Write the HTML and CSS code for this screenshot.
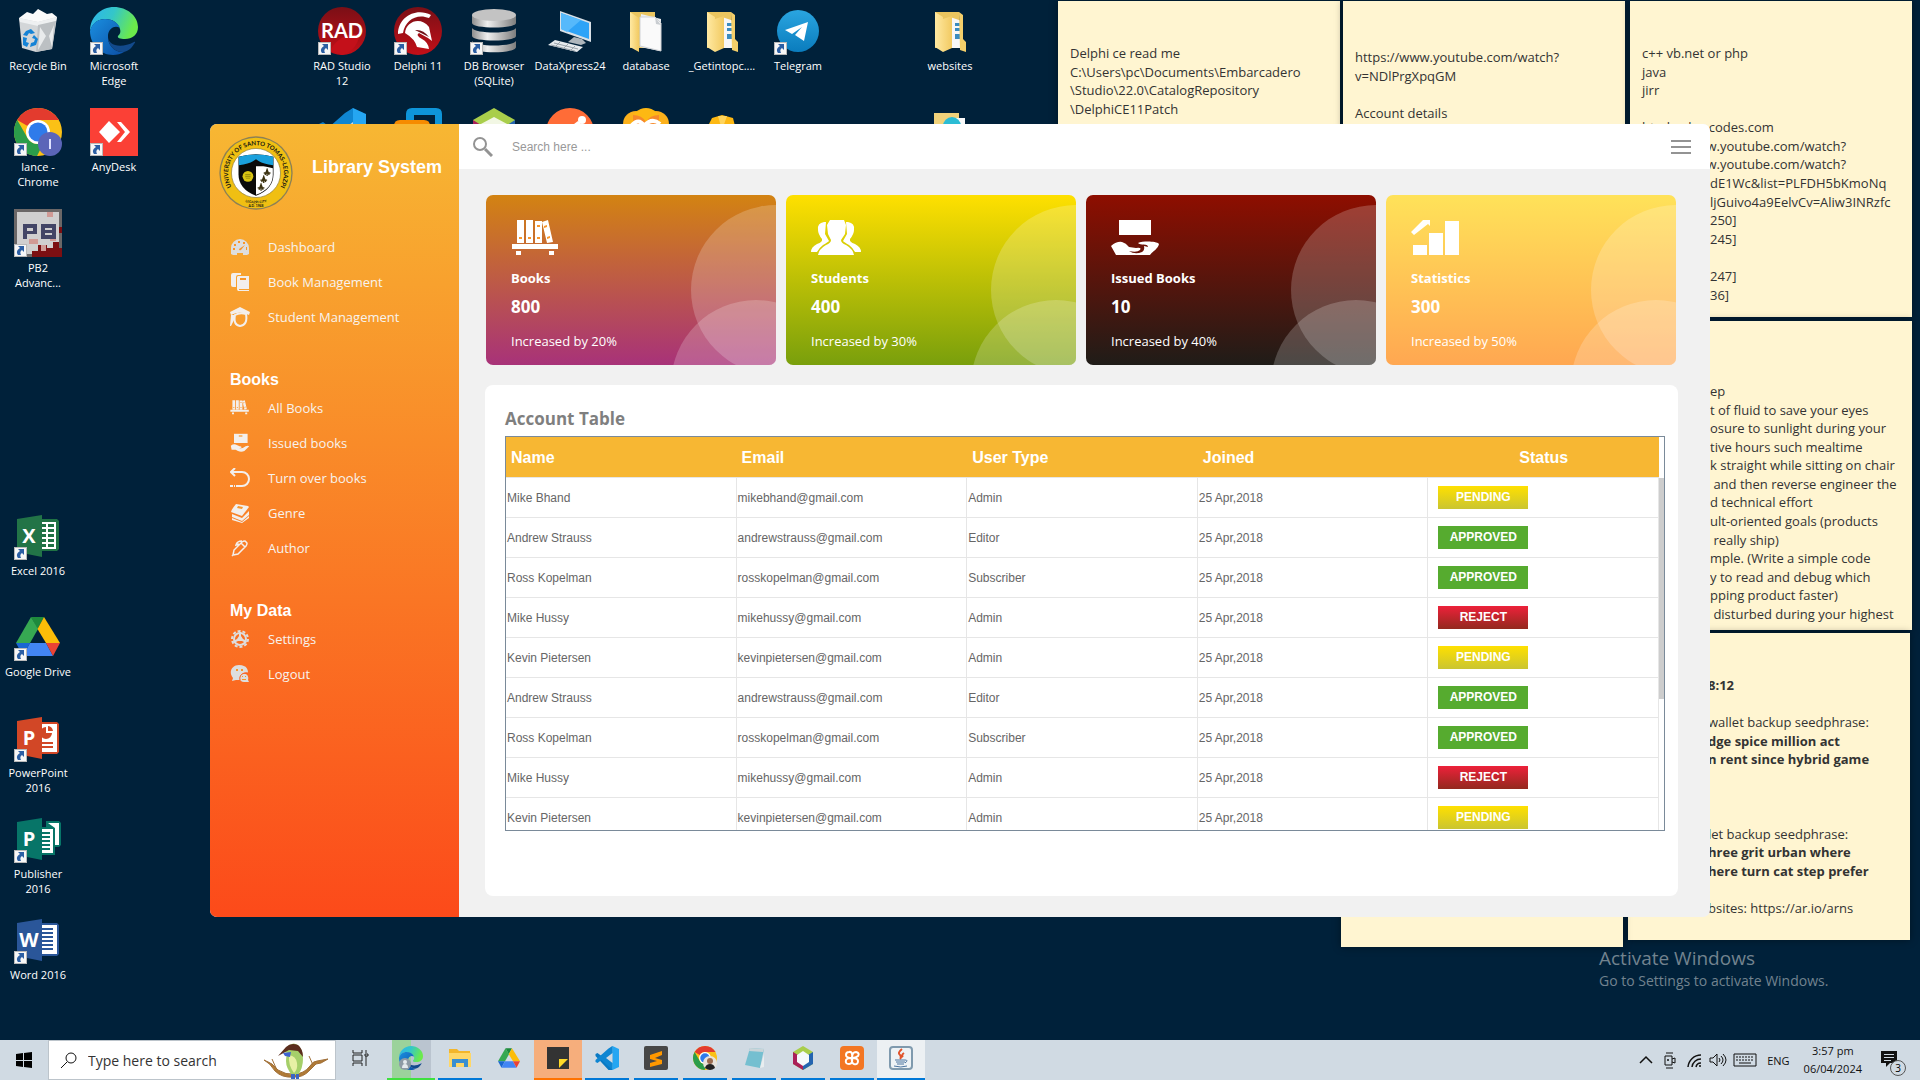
FILE: index.html
```html
<!DOCTYPE html>
<html lang="en">
  <head>
    <meta charset="UTF-8" />
    <meta name="viewport" content="width=device-width, initial-scale=1.0" />
    <title>Library System</title>
    <link rel="stylesheet" href="styles.css">
  </head>
  <body>
    <!-- shared icon shapes -->
    <svg class="defs" aria-hidden="true">
      <defs>
        <linearGradient id="gEdgeTop" x1="0" y1="0" x2="1" y2="0.3">
          <stop offset="0" stop-color="#2cb4ee" />
          <stop offset="0.5" stop-color="#34c6c9" />
          <stop offset="1" stop-color="#6bea4b" />
        </linearGradient>
        <linearGradient id="gEdgeLow" x1="0" y1="0" x2="1" y2="1">
          <stop offset="0" stop-color="#1a8fe0" />
          <stop offset="1" stop-color="#0c4fa5" />
        </linearGradient>
        <linearGradient id="gRad" x1="0" y1="0" x2="0" y2="1">
          <stop offset="0" stop-color="#7a0f16" />
          <stop offset="1" stop-color="#c30f18" />
        </linearGradient>
        <linearGradient id="gSilver" x1="0" y1="0" x2="1" y2="0">
          <stop offset="0" stop-color="#8e8e8e" />
          <stop offset="0.35" stop-color="#efefef" />
          <stop offset="1" stop-color="#7d7d7d" />
        </linearGradient>
        <linearGradient id="gTelegram" x1="0" y1="0" x2="0" y2="1">
          <stop offset="0" stop-color="#2aa5e0" />
          <stop offset="1" stop-color="#0a7cbd" />
        </linearGradient>
        <linearGradient id="gFolder" x1="0" y1="0" x2="1" y2="0">
          <stop offset="0" stop-color="#ffe9a2" />
          <stop offset="1" stop-color="#f2ca62" />
        </linearGradient>
      </defs>
      <symbol id="shortcut" viewBox="0 0 13 13">
        <path d="M0 0h13v13H0z" fill="#b9b9b9" />
        <path d="M1 1h11v11H1z" fill="#f7f7f7" />
        <path d="M4 2h6v6L8 6C6 7 6 9 7 11H4C2 8 3 6 6 4z" fill="#2c5fa4" />
      </symbol>
      <symbol id="edge" viewBox="0 0 48 48">
        <path d="M0 24C0 10 11 0 24 0s24 9 24 20c0 8-6 12-13 12-5 0-8-1-7-3 2-2 3-4 2-7C28 16 23 12 15 12 7 12 2 17 0 24z" fill="url(#gEdgeTop)" />
        <path d="M0 24c2-8 8-12 15-12 8 0 13 4 15 9-5-3-11 0-12 7-1 10 7 18 16 17-3 2-7 3-11 3C10 48 0 37 0 24z" fill="url(#gEdgeLow)" />
        <path d="M18 28c-1 11 13 14 26 7 2-1 1 1 0 2-3 5-6 7-10 8-9 1-17-7-16-17z" fill="#124a8c" />
      </symbol>
      <symbol id="chrome" viewBox="0 0 48 48">
        <circle cx="24" cy="24" r="24" fill="#fbc116" />
        <path d="M24 0a24 24 0 0 1 21 12H24a12 12 0 0 0-10.400 6L3.200 12A24 24 0 0 1 24 0z" fill="#e33b2e" />
        <path d="M3.200 12l10.400 18A12 12 0 0 0 24 36h5l-6 12A24 24 0 0 1 3.200 12z" fill="#2b9d4a" />
        <circle cx="24" cy="24" r="12" fill="#fff" />
        <circle cx="24" cy="24" r="9.500" fill="#2f7bea" />
      </symbol>
      <symbol id="drive" viewBox="0 0 44 39">
        <path d="M15 0h13l-6.500 12z" fill="#1e8a3c" />
        <path d="M15 0L0 26h14L22 12z" fill="#36a852" />
        <path d="M28 0l16 26H30L21.500 12z" fill="#fcbd08" />
        <path d="M0 26h14l-7 13z" fill="#1967d2" />
        <path d="M14 26h16l7 13H7z" fill="#4285f4" />
        <path d="M30 26h14l-7 13z" fill="#ea4335" />
      </symbol>
      <symbol id="vscode" viewBox="0 0 48 48">
        <path d="M35 0L13 20 5 14l-4 2v4l26 28h8z" fill="#0a7ac4" />
        <path d="M35 48L13 28l-8 6-4-2v-4L27 5l8-5z" fill="#0f86d2" />
        <path d="M35 0l13 6v36l-13 6z" fill="#25a6f2" />
        <path d="M35 14v20L22 24z" fill="#cfd9e2" />
      </symbol>
      <symbol id="folder" viewBox="0 0 48 48">
        <path d="M9 5h24v36H9z" fill="#eac55f" />
        <path d="M24 10l12 4v27H24z" fill="#f7f7f7" />
        <path d="M29 16h6v3h-6zm0 5h6v3h-6zm0 6h6v5h-6z" fill="#3a8cc0" />
        <path d="M9 5l8 5v35l-8-5zM17 12l9-3v32l-9 4z" fill="url(#gFolder)" />
        <path d="M33 5l4 3v24l3 3v10l-6-2z" fill="#f4cf6a" />
      </symbol>
      <symbol id="shelf" viewBox="0 0 50 35">
        <path d="M6 0h7v23H6zm9 0h7v23h-7zm9 1h7v22h-7zm7 1l6-2 5 22-6 1zM1 24h46v5H1zm4 7h5v4H5zm33 0h5v4h-5z" fill="currentColor" />
        <path d="M8 17h3v2H8zm9 0h3v2h-3zm9 0h3v2h-3zm0-12h3v2h-3zm7 1l3-1v2l-3 1zm3 11l3-1v2l-3 1z" class="cut" />
      </symbol>
      <symbol id="giving" viewBox="0 0 50 35">
        <path d="M8 0h32v15H8z" fill="currentColor" />
        <path d="M0 26q6-5 11-4 4 1 7 5l7 1q6-1 4 2-3 3-11 1 6 4 13 1 3-2 2-6l4 1c0-4-8-1-10-4 5-2 18-2 21 1-1 5-6 7-9 11H19L5 35z" fill="currentColor" />
      </symbol>
    </svg>

    <main class="desktop">
      <div class="icons">
        <a class="shortcut c1 r1" href="#">
          <svg viewBox="0 0 48 48"><path d="M5 11l38-1-5 32-16 3-14-4z" fill="#d3d6d8" /><path d="M5 11l8-6 6 2 5-5 9 5 5-1 5 4-19 5z" fill="#fafafa" /><path d="M5 11l19 4 19-5-1 4-18 5L6 15z" fill="#eef0f1" /><path d="M24 18l18-4-4 28-16 3z" fill="#bcc0c3" /><path d="M26 20l6 9-8 14zM40 18l-5 11 3 11z" fill="#e9ebec" /><path d="M12 24l5-2 4 4-4 1-2-1-2 3-4-1zM9 30l4 1-1 4 3 1-2 4-4-2zM20 28l4 4-2 6-6 2 1-4 3-1 1-3-3-1z" fill="#1583d6" /></svg>
          Recycle Bin
        </a>
        <a class="shortcut c1 r2" href="#">
          <svg viewBox="0 0 48 48"><use href="#chrome" width="48" height="48" /><circle cx="36" cy="36" r="12" fill="#5b65b8" /><path d="M35 31h2v10h-2z" fill="#dfe2ff" /><use href="#shortcut" y="35" width="13" height="13" /></svg>
          lance - Chrome
        </a>
        <a class="shortcut c1 r3" href="#">
          <svg viewBox="0 0 48 48"><path d="M0 0h48v48H0z" fill="#6b6767" /><path d="M3 3h42v42H3z" fill="#d0cfcf" /><path d="M45 18h3v6h-3zM39 33h6v6h3v9H18v-6h6v-6h9v3h6z" fill="#7c0f12" /><path d="M15 30h9v5h-9zm18-27h6v5h-6zm3 24h6v5h-6zM27 36h5v6h-5z" fill="#d09a95" /><path d="M9 15h14v10H13v5H9zm4 4v3h6v-3zM27 15h15v15H27zm4 4v2h7v-2zm0 5v2h7v-2z" fill="#434566" fill-rule="evenodd" /><use href="#shortcut" y="35" width="13" height="13" /></svg>
          PB2 Advanc...
        </a>
        <a class="shortcut c1 r6" href="#">
          <svg viewBox="0 0 48 48"><path d="M27 7h16l2 2v28l-2 2H27z" fill="#1f7244" /><path d="M28 10h14v27H28z" fill="#fff" /><path d="M28 12h4v3h-4zm6 0h6v3h-6zm-6 5h4v3h-4zm6 0h6v3h-6zm-6 5h4v3h-4zm6 0h6v3h-6zm-6 5h4v3h-4zm6 0h6v3h-6zm-6 5h4v3h-4zm6 0h6v3h-6z" fill="#1f7244" /><path d="M3 7l25-4v42L3 40z" fill="#227447" /><text x="15" y="31" class="letter">X</text><use href="#shortcut" y="35" width="13" height="13" /></svg>
          Excel 2016
        </a>
        <a class="shortcut c1 r7" href="#">
          <svg viewBox="0 0 48 48"><use href="#drive" x="2" y="4" width="44" height="39" /><use href="#shortcut" y="35" width="13" height="13" /></svg>
          Google Drive
        </a>
        <a class="shortcut c1 r8" href="#">
          <svg viewBox="0 0 48 48"><path d="M27 8h16l2 2v28l-2 2H27z" fill="#d24726" /><path d="M28 10h15v28H28z" fill="#fff" /><path d="M32 13v6h6a6 6 0 1 1-6-6zm2-1a6 6 0 0 1 5 5h-5zM28 28h11v2H28zm0 4h11v2H28z" fill="#d24726" /><path d="M3 7l25-4v42L3 40z" fill="#d24726" /><text x="15" y="31" class="letter">P</text><use href="#shortcut" y="35" width="13" height="13" /></svg>
          PowerPoint 2016
        </a>
        <a class="shortcut c1 r9" href="#">
          <svg viewBox="0 0 48 48"><path d="M32 6h13l2 2v22l-2 2h-4v8H27V12h5z" fill="#077568" /><path d="M34 8h11v22h-4V13z" fill="#fff" /><path d="M28 14h11v24H28z" fill="#fff" /><path d="M28 17h8v2h-8zm0 4h8v2h-8zm0 4h8v2h-8zm0 4h8v2h-8zm0 4h8v2h-8z" fill="#077568" /><path d="M3 7l25-4v42L3 40z" fill="#077568" /><text x="15" y="31" class="letter">P</text><use href="#shortcut" y="35" width="13" height="13" /></svg>
          Publisher 2016
        </a>
        <a class="shortcut c1 r10" href="#">
          <svg viewBox="0 0 48 48"><path d="M27 7h16l2 2v29l-2 2H27z" fill="#2a5699" /><path d="M28 9h15v29H28z" fill="#fff" /><path d="M28 12h11v2H28zm0 4h11v2H28zm0 4h11v2H28zm0 4h11v2H28zm0 4h11v2H28zm0 4h11v2H28z" fill="#2a5699" /><path d="M3 7l25-4v42L3 40z" fill="#2a5699" /><text x="15" y="31" class="letter">W</text><use href="#shortcut" y="35" width="13" height="13" /></svg>
          Word 2016
        </a>
        <a class="shortcut c2 r1" href="#">
          <svg viewBox="0 0 48 48"><use href="#edge" width="48" height="48" /><use href="#shortcut" y="35" width="13" height="13" /></svg>
          Microsoft Edge
        </a>
        <a class="shortcut c2 r2" href="#">
          <svg viewBox="0 0 48 48"><path d="M0 0h48v48H0z" fill="#fb4036" /><path d="M19 13l11 11-11 11L9 24z" fill="#fff" /><path d="M27 14h4l9 10-9 10h-4l8-10z" fill="#fff" /><use href="#shortcut" y="35" width="13" height="13" /></svg>
          AnyDesk
        </a>
        <a class="shortcut c5 r1" href="#">
          <svg viewBox="0 0 48 48"><circle cx="24" cy="24" r="24" fill="url(#gRad)" /><path d="M12 44q9-18 30-17-4 18-18 21z" fill="#c4101a" /><text x="24" y="31" class="rad">RAD</text><use href="#shortcut" y="35" width="13" height="13" /></svg>
          RAD Studio 12
        </a>
        <a class="shortcut c6 r1" href="#">
          <svg viewBox="0 0 48 48"><circle cx="24" cy="24" r="24" fill="url(#gRad)" /><path d="M4 27C4 10 22 0 37 8l-2 3C23 6 11 13 9 26z" fill="#fff" /><path d="M11 26c1-12 16-17 24-6l3 14-4-3-9-5q-4 2 3 6 6 3 7 10l-12-2q-2-8-12-14z" fill="#fff" /><path d="M21 23q8-1 14 7l-8-4z" fill="#6f1218" /><use href="#shortcut" y="35" width="13" height="13" /></svg>
          Delphi 11
        </a>
        <a class="shortcut c7 r1" href="#">
          <svg viewBox="0 0 48 48"><path d="M2 8v8c0 6 44 6 44 0V8zM2 21v8c0 6 44 6 44 0v-8c-3 6-41 6-44 0zM2 34v6c0 7 44 7 44 0v-6c-3 6-41 6-44 0z" fill="url(#gSilver)" /><ellipse cx="24" cy="8" rx="22" ry="6" fill="#c3c3c3" /><use href="#shortcut" y="35" width="13" height="13" /></svg>
          DB Browser (SQLite)
        </a>
        <a class="shortcut c8 r1" href="#">
          <svg viewBox="0 0 48 48"><path d="M14 4l31 11v20L14 24z" fill="#d9e0e6" /><path d="M15 6l28 10v16L15 22z" fill="#2ea3f7" /><path d="M15 6l20 7-14 12-6-3z" fill="#56b9fb" /><path d="M28 30l8 2 4 4-5 2-13-3z" fill="#aeb6bc" /><path d="M9 33l28 7-6 5L2 38z" fill="#e6eaed" /><path d="M8 36l24 6M5 38l24 6M14 35l-5 5M22 37l-5 5M29 39l-5 5" stroke="#9aa3aa" /></svg>
          DataXpress24
        </a>
        <a class="shortcut c9 r1" href="#">
          <svg viewBox="0 0 48 48"><path d="M8 5h25v36H8z" fill="#eac55f" /><path d="M19 7l20 5-1 32-20-4z" fill="#eef0f2" /><path d="M18 10h15l6 6v28l-21-5z" fill="#fafafa" stroke="#cfd2d5" /><path d="M33 10l1 7 5 1z" fill="#c9cdd1" /><path d="M8 5l9 6v34l-9-5z" fill="url(#gFolder)" /></svg>
          database
        </a>
        <a class="shortcut c10 r1" href="#">
          <svg viewBox="0 0 48 48"><use href="#folder" width="48" height="48" /></svg>
          _Getintopc....
        </a>
        <a class="shortcut c11 r1" href="#">
          <svg viewBox="0 0 48 48"><circle cx="24" cy="24" r="21" fill="url(#gTelegram)" /><path d="M11 23l23-8-4 19-9-6 7-8-10 7z" fill="#fff" /><use href="#shortcut" y="35" width="13" height="13" /></svg>
          Telegram
        </a>
        <a class="shortcut c13 r1" href="#">
          <svg viewBox="0 0 48 48"><use href="#folder" width="48" height="48" /></svg>
          websites
        </a>
        <a class="shortcut c5 r2" href="#" aria-label="Code editor">
          <svg viewBox="0 0 48 48"><use href="#vscode" width="48" height="48" /></svg>
        </a>
        <a class="shortcut c6 r2" href="#" aria-label="Virtual machines">
          <svg viewBox="0 0 48 48"><path d="M18 0h24q6 0 6 6v30H12V6q0-6 6-6zm2 7v22h21V7z" fill="#0e95d9" fill-rule="evenodd" /><path d="M6 12h24q6 0 6 6v30H0V18q0-6 6-6z" fill="#f68b00" /></svg>
        </a>
        <a class="shortcut c7 r2" href="#" aria-label="IDE">
          <svg viewBox="0 0 48 48"><path d="M24 0l21 12v24L24 48 3 36V12z" fill="#a9ce4b" /><path d="M24 9l15 8-15 9-15-9z" fill="#f2f7e4" /><path d="M3 12l8 5-3 20-5-1z" fill="#aa2058" /><path d="M45 12l-8 5 3 20 5-1z" fill="#2464b0" /></svg>
        </a>
        <a class="shortcut c8 r2" href="#" aria-label="API client">
          <svg viewBox="0 0 48 48"><circle cx="24" cy="24" r="24" fill="#ff6c37" /><circle cx="36" cy="12" r="4" fill="#fff" /><path d="M15 26l17-13 3 3-16 12z" fill="#fff" /></svg>
        </a>
        <a class="shortcut c9 r2" href="#" aria-label="Media app">
          <svg viewBox="0 0 48 48"><circle cx="14" cy="16" r="13" fill="#fcb11b" /><circle cx="34" cy="16" r="13" fill="#fcb11b" /><circle cx="24" cy="14" r="14" fill="#fdb813" /><path d="M11 7q9 0 13 7 4-7 13-7v16H11z" fill="#f6892a" /><path d="M9 18q8-9 13 0 8-9 16-2" stroke="#fff" stroke-width="4" fill="none" /></svg>
        </a>
        <a class="shortcut c10 r2" href="#" aria-label="Archive">
          <svg viewBox="0 0 48 48"><path d="M14 10l10-3 11 3 3 12H8z" fill="#fdb813" /><path d="M20 8l4 14 5-14z" fill="#ffd45c" /></svg>
        </a>
        <a class="shortcut c13 r2" href="#" aria-label="Folder">
          <svg viewBox="0 0 48 48"><path d="M8 5h25v36H8z" fill="#f1d27a" /><path d="M30 10h9v30h-9z" fill="#fafafa" /><circle cx="26" cy="18" r="9" fill="#2bbcd4" /></svg>
        </a>
      </div>

      <section class="note note-delphi">
        <p>Delphi ce read me<br />C:\Users\pc\Documents\Embarcadero<br />\Studio\22.0\CatalogRepository<br />\DelphiCE11Patch</p>
      </section>
      <section class="note note-account">
        <p>https://www.youtube.com/watch?<br />v=NDlPrgXpqGM<br /><br />Account details</p>
      </section>
      <section class="note note-langs">
        <p>c++ vb.net or php<br />java<br />jirr<br /><br />html-color-codes.com<br />https://www.youtube.com/watch?<br />https://www.youtube.com/watch?</p>
        <p class="indent">dE1Wc&amp;list=PLFDH5bKmoNq<br />ljGuivo4a9EelvCv=Aliw3INRzfc<br />250]<br />245]<br /><br />247]<br />36]</p>
      </section>
      <section class="note note-habits">
        <p class="indent">ep<br />t of fluid to save your eyes<br />osure to sunlight during your<br />tive hours such mealtime<br />k straight while sitting on chair<br />&nbsp;and then reverse engineer the<br />d technical effort<br />ult-oriented goals (products<br />&nbsp;really ship)<br />mple. (Write a simple code<br />y to read and debug which<br />pping product faster)<br />&nbsp;disturbed during your highest</p>
      </section>
      <section class="note note-wallet">
        <p class="indent"><b>8:12</b><br /><br />wallet backup seedphrase:<br /><b>dge spice million act<br />n rent since hybrid game</b><br /><br /><br /><br />let backup seedphrase:<br /><b>hree grit urban where<br />here turn cat step prefer</b><br /><br />bsites: https://ar.io/arns</p>
      </section>
      <section class="note note-blank"></section>

      <div class="activate">
        <p class="activate-title">Activate Windows</p>
        <p>Go to Settings to activate Windows.</p>
      </div>

      <div class="window">
        <aside class="sidebar">
          <header class="brand">
            <svg class="seal" viewBox="0 0 220 220">
              <circle cx="110" cy="110" r="109" fill="#8c8056" />
              <circle cx="110" cy="110" r="105" fill="#f0bf12" />
              <circle cx="110" cy="110" r="73" fill="#fff" stroke="#8b7a3a" stroke-width="2" />
              <path id="ringTop" d="M51 169A83 83 0 1 1 169 169" fill="none" />
              <path id="ringLow" d="M60 190Q110 210 160 190" fill="none" />
              <text class="ring"><textPath href="#ringTop" startOffset="50%">UNIVERSITY OF SANTO TOMAS-LEGAZPI</textPath></text>
              <text class="ring-small"><textPath href="#ringLow" startOffset="50%">LEGAZPI CITY</textPath></text>
              <text class="ring-small" x="110" y="211">A.D. 1948</text>
              <path d="M58 62q52-16 104 0v52q0 44-52 64-52-20-52-64z" fill="#0a0a0a" />
              <path d="M110 84l50 12v20q0 40-50 59z" fill="#fff" />
              <path d="M59 62q51-14 102 0v25q-30-4-42-12l-9-6-9 6q-12 8-42 12z" fill="#1aa0dc" />
              <path d="M72 90q24-5 38-19 14 14 38 19z" fill="#0a0a0a" />
              <circle cx="86" cy="120" r="16" fill="#d8c313" />
              <path d="M78 114h16v3H78zm0 6h16v3H78zm2 6h12v2H80z" fill="#8f8108" />
              <path d="M143 97v22m-10-9h20m-16 6l6-16 6 16M133 118v22m-10-9h20m-16 6l6-16 6 16M125 141v22m-10-9h20m-16 6l6-16 6 16" stroke="#3b3210" stroke-width="4" fill="none" />
            </svg>
            <h1>Library System</h1>
          </header>
          <nav class="menu">
            <a href="#"><svg class="dim" viewBox="0 0 20 20"><path d="M1 17V11a9 9 0 0 1 18 0v6l-2 1h-4V16H7v2H3z" fill="currentColor" /><path d="M4 7h2v2H4zm4-3h2v2H8zm5 1h2v2h-2zM3 11h2v2H3zm13-1h1v3h-1zM9 12l6-4-4 5q-2 1-2-1z" class="cut" /></svg>Dashboard</a>
            <a href="#"><svg viewBox="0 0 20 20"><path d="M3 1h8v2H8Q6 3 6 5v10H3q-2 0-2-2V3q0-2 2-2z" fill="currentColor" /><path d="M8 4h11v13H9v1h10v1H8q-1-1-1-2V5z" fill="currentColor" /><path d="M10 6h6v2h-6z" class="cut" /></svg>Book Management</a>
            <a href="#"><svg viewBox="0 0 20 20"><path d="M10 0l10 5-1 3q-9-5-18 0L0 5zM1 8h3v5l-3 6H0z" fill="currentColor" /><path d="M5 8q5-3 11-1 2 11-6 12Q3 18 5 8z" fill="none" stroke="currentColor" stroke-width="2" /></svg>Student Management</a>

            <h2>Books</h2>
            <a href="#"><svg viewBox="0 0 50 50"><use href="#shelf" width="50" height="46" /></svg>All Books</a>
            <a href="#"><svg viewBox="0 0 50 50"><path d="M10 2h34v23H10z" fill="currentColor" /><path d="M22 6h9v3h-9z" class="cut" /><path d="M2 32q8-6 15-2l7 3q5 0 5 3l-6 3q10 0 16-6 7-2 9 0L36 45q-8 4-16 0l-6-3H4z" fill="currentColor" /></svg>Issued books</a>
            <a href="#"><svg viewBox="0 0 20 20"><path d="M0 18h3m1 0h1m1 0h6a6 6 0 0 0 0-14H1M5 0L1 4l4 4" fill="none" stroke="currentColor" stroke-width="2" /></svg>Turn over books</a>
            <a href="#"><svg viewBox="0 0 20 20"><path d="M6 1l12 2 1 1-7 9L1 9q0-2 5-8z" fill="currentColor" /><path d="M2 11l10 4 7-7v4l-7 6-10-4zM2 15l10 4 7-6v2l-7 5L2 17z" fill="currentColor" /><path d="M8 3l5 1-1 2-5-1z" class="cut" /></svg>Genre</a>
            <a href="#"><svg viewBox="0 0 20 20"><path d="M3 17l1-5 8-8q3-2 4 0 2 1 0 4l-8 8-5 1zM9 6L6 7q1-4 6-4M11 5l4 4M3 17l-1 1" fill="none" stroke="currentColor" stroke-width="1.500" /></svg>Author</a>

            <h2>My Data</h2>
            <a href="#"><svg class="dim" viewBox="0 0 20 20"><circle cx="10" cy="10" r="8" fill="none" stroke="currentColor" stroke-width="2" stroke-dasharray="3 2" /><circle cx="10" cy="10" r="6" fill="none" stroke="currentColor" stroke-width="2" /><path d="M9 3h2v4l2 3 4 2-1 2-4-2h-4l-4 2-1-2 4-2 2-3z" fill="currentColor" /></svg>Settings</a>
            <a href="#"><svg class="dim" viewBox="0 0 20 20"><path d="M9 1c10 0 9 8 9 8-6-1-9 3-8 7H6l-4 1 1-3C-2 8 2 1 9 1z" fill="currentColor" /><path d="M13 10c5-1 6 4 5 6l1 2h-5c-5 0-6-7-1-8z" fill="currentColor" /><path d="M6 5h2v2H6zm5 0h2v2h-2zm1 7h1v1h-1zm3 0h1v1h-1zm-3 3h4v1h-4z" class="cut" /><path d="M18 9c-6-1-9 3-8 7" fill="none" class="seam" /></svg>Logout</a>
          </nav>
        </aside>

        <div class="main">
          <header class="topbar">
            <label for="search" aria-label="Search">
              <svg viewBox="0 0 20 20"><circle cx="7" cy="7" r="6" fill="none" stroke="currentColor" stroke-width="2" /><path d="M12 12l7 7" stroke="currentColor" stroke-width="3" /></svg>
            </label>
            <input type="text" id="search" placeholder="Search here ..." />
            <button class="burger" aria-label="Menu">
              <svg viewBox="0 0 20 14"><path d="M0 0h20v2H0zm0 6h20v2H0zm0 6h20v2H0z" fill="currentColor" /></svg>
            </button>
          </header>

          <div class="content">
            <div class="cards">
              <article class="card books">
                <svg viewBox="0 0 50 35"><use href="#shelf" width="50" height="35" /></svg>
                <h3>Books</h3>
                <strong>800</strong>
                <p>Increased by 20%</p>
              </article>
              <article class="card students">
                <svg viewBox="0 0 50 35"><path d="M19 0h14l2 5-1 9-4 6q0 3 5 5 7 4 8 10H7q1-6 8-10 5-2 5-5l-3-6-1-9z" fill="currentColor" /><path d="M15 2l-1 12 4 7q-1 1-6 4-4 3-6 7H0q0-5 6-8 6-2 5-5-4-5-4-9Q6 3 13 2zM35 2h2q7 1 6 8 0 4-4 9-1 3 5 5 6 3 6 8h-6q-2-4-6-7-5-3-6-4l4-7z" fill="currentColor" /></svg>
                <h3>Students</h3>
                <strong>400</strong>
                <p>Increased by 30%</p>
              </article>
              <article class="card issued">
                <svg viewBox="0 0 50 35"><use href="#giving" width="50" height="35" /></svg>
                <h3>Issued Books</h3>
                <strong>10</strong>
                <p>Increased by 40%</p>
              </article>
              <article class="card stats">
                <svg viewBox="0 0 50 35"><path d="M2 25h14v10H2zm16-12h14v22H18zM34 1h14v34H34zM0 12L12 0h7v6l-2-2L3 15z" fill="currentColor" /></svg>
                <h3>Statistics</h3>
                <strong>300</strong>
                <p>Increased by 50%</p>
              </article>
            </div>

            <section class="panel">
              <h2>Account Table</h2>
              <div class="table-box">
                <table>
                  <thead>
                    <tr><th>Name</th><th>Email</th><th>User Type</th><th>Joined</th><th class="center">Status</th></tr>
                  </thead>
                  <tbody>
                    <tr><td>Mike Bhand</td><td>mikebhand@gmail.com</td><td>Admin</td><td>25 Apr,2018</td><td><span class="status pending">PENDING</span></td></tr>
                    <tr><td>Andrew Strauss</td><td>andrewstrauss@gmail.com</td><td>Editor</td><td>25 Apr,2018</td><td><span class="status approved">APPROVED</span></td></tr>
                    <tr><td>Ross Kopelman</td><td>rosskopelman@gmail.com</td><td>Subscriber</td><td>25 Apr,2018</td><td><span class="status approved">APPROVED</span></td></tr>
                    <tr><td>Mike Hussy</td><td>mikehussy@gmail.com</td><td>Admin</td><td>25 Apr,2018</td><td><span class="status reject">REJECT</span></td></tr>
                    <tr><td>Kevin Pietersen</td><td>kevinpietersen@gmail.com</td><td>Admin</td><td>25 Apr,2018</td><td><span class="status pending">PENDING</span></td></tr>
                    <tr><td>Andrew Strauss</td><td>andrewstrauss@gmail.com</td><td>Editor</td><td>25 Apr,2018</td><td><span class="status approved">APPROVED</span></td></tr>
                    <tr><td>Ross Kopelman</td><td>rosskopelman@gmail.com</td><td>Subscriber</td><td>25 Apr,2018</td><td><span class="status approved">APPROVED</span></td></tr>
                    <tr><td>Mike Hussy</td><td>mikehussy@gmail.com</td><td>Admin</td><td>25 Apr,2018</td><td><span class="status reject">REJECT</span></td></tr>
                    <tr><td>Kevin Pietersen</td><td>kevinpietersen@gmail.com</td><td>Admin</td><td>25 Apr,2018</td><td><span class="status pending">PENDING</span></td></tr>
                  </tbody>
                </table>
                <div class="scrollbar"><div class="thumb"></div></div>
              </div>
            </section>
          </div>
        </div>
      </div>
    </main>

    <footer class="taskbar">
      <button class="start" aria-label="Start">
        <svg viewBox="0 0 16 16"><path d="M0 2l7-1v7H0zm8-1l8-1v8H8zM0 9h7v6l-7-1zm8 0h8v7l-8-1z" fill="#000" /></svg>
      </button>
      <div class="search-box">
        <label for="taskSearch" aria-label="Search"><svg viewBox="0 0 16 16"><circle cx="10" cy="6" r="5" fill="none" stroke="#111" /><path d="M6 10l-6 6" stroke="#111" /></svg></label>
        <input type="text" id="taskSearch" placeholder="Type here to search" />
        <svg class="bird" viewBox="0 0 66 36"><path d="M1 17q9 3 14 10 8 5 16 4 10 0 16-8 3-5 7-5l11-2-7 4-5 1-6 6q-7 8-17 7-11 1-18-6Q7 20 1 17zM13 25l-4-9M50 22l-4-9" fill="#b07a35" stroke="#a0703a" /><path d="M20 9l5-6q6-5 11 0 4 5 4 13 0 9-5 16h-6q-6-7-6-14 0-5 2-8z" fill="#a5cf6a" /><path d="M26 12q7 1 8 8 1 6-3 10-6-8-5-18z" fill="#e7f0a5" /><path d="M15 13l8-9q5-5 12-2 5 4 5 12l-5-6-9-1z" fill="#5b2d1e" /><path d="M20 10l8-1-1 5-5-1z" fill="#3f62d0" /><path d="M28 31h4v5h-4zm5 0h3v5h-3z" fill="#3b66c4" /></svg>
      </div>
      <button class="task-view" aria-label="Task view">
        <svg viewBox="0 0 18 16"><path d="M2 0v3h9V0M2 16v-3h9v3M2 5h9v6H2zM15 0v3m0 3v10M14 4h3v2h-3z" fill="none" stroke="#222" /></svg>
      </button>
      <div class="apps">
        <button class="app edge-app" aria-label="Edge"><svg viewBox="0 0 24 24"><use href="#edge" width="24" height="24" /><circle cx="6" cy="18" r="6" fill="#8e9aa5" /><circle cx="6" cy="16" r="2" fill="#e6eaee" /><path d="M3 22q0-4 3-4t3 4z" fill="#e6eaee" /></svg></button>
        <button class="app open" aria-label="Explorer"><svg viewBox="0 0 24 24"><path d="M1 3h8l2 2h11v16H1z" fill="#f3b62b" /><path d="M1 7h22v14H1z" fill="#ffd767" /><path d="M4 13h16v8h-4v-4H8v4H4z" fill="#3a8fd1" /></svg></button>
        <button class="app" aria-label="Drive"><svg viewBox="0 0 24 24"><use href="#drive" x="1" y="2" width="22" height="20" /></svg></button>
        <button class="app alert" aria-label="Sticky Notes"><svg viewBox="0 0 24 24"><path d="M1 1h22v22H1z" fill="#333" /><path d="M13 22v-9h9z" fill="#ffd928" /></svg></button>
        <button class="app open" aria-label="Code editor"><svg viewBox="0 0 24 24"><use href="#vscode" width="24" height="24" /></svg></button>
        <button class="app open" aria-label="Text editor"><svg viewBox="0 0 24 24"><rect width="24" height="24" rx="2" fill="#474747" /><path d="M6 9l12-4v4l-7 3 7 2v4L6 21v-4l7-2-7-2z" fill="#ff9800" /></svg></button>
        <button class="app open" aria-label="Chrome"><svg viewBox="0 0 24 24"><use href="#chrome" width="24" height="24" /><circle cx="17" cy="17" r="7" fill="#e9e4dc" /><circle cx="17" cy="15" r="3" fill="#9a6b4f" /><path d="M12 22q1-4 5-4t5 4q-5 4-10 0z" fill="#222" /></svg></button>
        <button class="app open" aria-label="Notepad"><svg viewBox="0 0 24 24"><path d="M8 2l14 1-4 19-15-3z" fill="#75bfd0" /><path d="M8 2l14 1-1 3L7 5z" fill="#c9d4d8" /><path d="M18 22L22 8v13z" fill="#e8edef" /></svg></button>
        <button class="app open" aria-label="NetBeans"><svg viewBox="0 0 24 24"><path d="M12 0l10 6v12l-10 6L2 18V6z" fill="#a9ce4b" /><path d="M2 6l5 3v7l5 3v5L2 18z" fill="#aa2058" /><path d="M22 6l-5 3v7l-5 3v5l10-6z" fill="#2464b0" /><path d="M12 5l6 4v7l-6 4-6-4V9z" fill="#f5f9fb" /></svg></button>
        <button class="app open" aria-label="XAMPP"><svg viewBox="0 0 24 24"><rect width="24" height="24" rx="4" fill="#f37623" /><path d="M9 6q4-1 3 6 0-6 4-6 4 1 2 4-2 2-6 2 6 0 6 3 0 4-4 3-3-1-2-6 1 6-3 6-4 0-3-4 1-2 6-2-6 0-6-3 0-3 3-3z" fill="none" stroke="#fff" stroke-width="2" /></svg></button>
        <button class="app open active" aria-label="Java"><svg viewBox="0 0 24 24"><rect x="1" y="1" width="22" height="22" rx="3" fill="#eef3f6" stroke="#7f9aae" stroke-width="2" /><path d="M13 3q-5 4-2 6 2 2 0 4M15 7q-3 2-1 4" stroke="#e0542c" stroke-width="2" fill="none" /><path d="M6 14h10M7 16h9M8 18h7M5 20q7 2 13 0M16 14q4 0 0 3" stroke="#4a74a0" fill="none" /></svg></button>
      </div>
      <div class="tray">
        <svg viewBox="0 0 18 18"><path d="M3 12l6-6 6 6" fill="none" stroke="#111" stroke-width="1.500" /></svg>
        <svg viewBox="0 0 18 18"><path d="M4 5h7v9H4zM11 8l3-1v5l-3-1M5 2h7M5 17h7" fill="none" stroke="#111" /><circle cx="7" cy="9" r="1" fill="#111" /></svg>
        <svg viewBox="0 0 18 18"><path d="M3 16A13 13 0 0 1 16 4M7 16a9 9 0 0 1 9-8M11 16a5 5 0 0 1 5-4" fill="none" stroke="#111" stroke-width="1.500" /><circle cx="15" cy="15" r="1" fill="#111" /></svg>
        <svg viewBox="0 0 18 18"><path d="M1 7h3l4-4v12l-4-4H1z" fill="none" stroke="#111" /><path d="M10 7q2 2 0 4M12 5q4 4 0 8M14 3q6 6 0 12" fill="none" stroke="#111" /></svg>
        <svg class="keyboard" viewBox="0 0 24 14"><path d="M1 1h22v12H1z" fill="none" stroke="#111" /><path d="M3 4h18M3 7h18" stroke="#111" stroke-dasharray="2 1" /><path d="M6 10h12" stroke="#111" /></svg>
        <span>ENG</span>
        <time>3:57 pm<br />06/04/2024</time>
        <button class="actions" aria-label="Notifications">
          <svg viewBox="0 0 18 18"><path d="M1 1h16v12H10l-4 4v-4H1z" fill="#111" /><path d="M4 4h10v1H4zm0 3h10v1H4zm0 3h7v1H4z" fill="#d0dae3" /></svg>
          <span class="badge">3</span>
        </button>
      </div>
    </footer>
  </body>
</html>
```
FILE: styles.css
```css
* {
  box-sizing: border-box;
  margin: 0;
  padding: 0;
}
body {
  display: flex;
  flex-direction: column;
  height: 100vh;
  overflow: hidden;
  background-color: #00213a;
  font-family: 'Segoe UI', 'Open Sans', sans-serif;
}
button,
input {
  border: none;
  background: none;
  font: inherit;
}
a {
  color: inherit;
  text-decoration: none;
}
.defs {
  position: absolute;
  width: 0;
  height: 0;
}

/* desktop */
.desktop {
  position: relative;
  flex: 1;
  overflow: hidden;
}
.icons {
  display: grid;
  grid-template-columns: repeat(13, 76px);
  grid-template-rows: repeat(10, 101px);
  padding-top: 7px;
}
.shortcut {
  display: flex;
  flex-direction: column;
  align-items: center;
  padding: 0 4px;
  color: #fff;
  font-size: 11px;
  line-height: 15px;
  text-align: center;
}
.shortcut svg {
  flex: none;
  width: 48px;
  height: 48px;
  margin-bottom: 3px;
}
.c1 { grid-column: 1; }
.c2 { grid-column: 2; }
.c5 { grid-column: 5; }
.c6 { grid-column: 6; }
.c7 { grid-column: 7; }
.c8 { grid-column: 8; }
.c9 { grid-column: 9; }
.c10 { grid-column: 10; }
.c11 { grid-column: 11; }
.c13 { grid-column: 13; }
.r1 { grid-row: 1; }
.r2 { grid-row: 2; }
.r3 { grid-row: 3; }
.r6 { grid-row: 6; }
.r7 { grid-row: 7; }
.r8 { grid-row: 8; }
.r9 { grid-row: 9; }
.r10 { grid-row: 10; }
.letter,
.rad {
  fill: #fff;
  font-weight: bold;
  text-anchor: middle;
}
.letter {
  font-size: 20px;
}
.rad {
  font-family: Lato, sans-serif;
  font-size: 20px;
}

/* sticky notes */
.note {
  position: absolute;
  width: 282px;
  padding: 0 12px;
  background-color: #fff5d1;
  color: #333;
  font-size: 13px;
  line-height: 1.43;
  white-space: nowrap;
  overflow: hidden;
  box-shadow: 0 0 8px rgba(0, 0, 0, 0.4);
}
.note .indent {
  padding-left: 68px;
}
.note-delphi {
  left: 1058px;
  top: 1px;
  height: 300px;
  padding-top: 43px;
}
.note-account {
  left: 1343px;
  top: 1px;
  height: 300px;
  padding-top: 47px;
}
.note-langs {
  left: 1630px;
  top: 1px;
  height: 316px;
  padding-top: 43px;
}
.note-habits {
  left: 1630px;
  top: 321px;
  height: 309px;
  padding-top: 61px;
}
.note-wallet {
  left: 1628px;
  top: 633px;
  height: 307px;
  padding-top: 43px;
}
.note-blank {
  left: 1341px;
  top: 640px;
  height: 307px;
}
.activate {
  position: absolute;
  left: 1599px;
  top: 944px;
  color: #72838f;
  font-size: 14px;
  line-height: 18px;
}
.activate-title {
  font-size: 19px;
  line-height: 28px;
}

/* application window */
.window {
  position: absolute;
  inset: 124px 210px 123px;
  display: flex;
  border-radius: 7px;
  overflow: hidden;
  background-color: #f1f1f1;
  font-size: 13px;
}
.sidebar {
  width: 249px;
  background: linear-gradient(#f7b733, #fc4a1a);
  color: #fff;
}
.brand {
  display: flex;
  align-items: center;
  gap: 19px;
  padding: 12px 8px 19px 9px;
}
.brand h1 {
  padding-bottom: 12px;
  font: bold 18px 'Liberation Sans', Arial, sans-serif;
  white-space: nowrap;
}
.seal {
  flex: none;
  width: 74px;
  height: 74px;
}
.ring,
.ring-small {
  fill: #111;
  font-family: Lato, sans-serif;
  font-weight: bold;
  text-anchor: middle;
}
.ring {
  font-size: 18px;
}
.ring-small {
  font-size: 10px;
}
.menu h2 {
  margin-top: 35px;
  padding-left: 20px;
  font: bold 16px 'Liberation Sans', Arial, sans-serif;
  line-height: 21px;
}
.menu a {
  display: flex;
  align-items: center;
  gap: 18px;
  height: 35px;
  padding-left: 20px;
  color: #f7f3ee;
  font-weight: 500;
}
.menu svg {
  width: 20px;
  height: 20px;
  color: #f3efec;
}
.menu .dim {
  color: #dedede;
}
.cut {
  fill: #f8962b;
}
.seam {
  stroke: #fb5f20;
}
.card .cut {
  fill: #c56433;
}

.main {
  display: flex;
  flex: 1;
  flex-direction: column;
  min-width: 0;
}
.topbar {
  display: flex;
  flex: none;
  align-items: center;
  height: 45px;
  padding: 0 19px 0 14px;
  background-color: #fff;
  color: #939393;
}
.topbar label {
  width: 39px;
}
.topbar label svg {
  display: block;
  width: 20px;
  height: 20px;
}
.topbar input {
  flex: 1;
  font: 12px 'Liberation Sans', Arial, sans-serif;
  outline: none;
}
.topbar input::placeholder {
  color: #999;
}
.burger svg {
  display: block;
  width: 20px;
  height: 14px;
  color: #939393;
}
.content {
  display: flex;
  flex: 1;
  flex-direction: column;
  gap: 20px;
  min-height: 0;
  padding: 26px 32px 21px 26px;
}
.cards {
  display: grid;
  grid-template-columns: repeat(4, 1fr);
  gap: 10px;
  padding: 0 2px 0 1px;
}
.card {
  position: relative;
  height: 170px;
  padding: 25px;
  border-radius: 7px;
  overflow: hidden;
  color: #fff;
}
.card::before,
.card::after {
  content: '';
  position: absolute;
  width: 170px;
  height: 170px;
  border-radius: 50%;
  background-color: rgba(255, 255, 255, 0.2);
}
.card::before {
  top: 10px;
  right: -85px;
}
.card::after {
  top: 105px;
  right: -65px;
}
.card svg {
  display: block;
  width: 50px;
  height: 35px;
}
.card h3 {
  margin-top: 13px;
  font-size: 13px;
  line-height: 20px;
}
.card strong {
  display: block;
  margin-top: 6px;
  font-size: 17px;
  line-height: 26px;
}
.card p {
  margin-top: 12px;
  font-weight: 500;
  line-height: 18px;
}
.books { background: linear-gradient(#d38312, #a83279); }
.students { background: linear-gradient(#ffe000, #799f0c); }
.issued { background: linear-gradient(#8e0e00, #1f1c18); }
.stats { background: linear-gradient(#ffe259, #ffa751); }

.panel {
  display: flex;
  flex: 1;
  flex-direction: column;
  min-height: 0;
  padding: 20px 13px 65px 20px;
  border-radius: 8px;
  background-color: #fff;
}
.panel h2 {
  margin-bottom: 3px;
  color: #7f7f7f;
  font-size: 17px;
  line-height: 28px;
}
.table-box {
  display: flex;
  align-items: flex-start;
  flex: 1;
  min-height: 0;
  overflow: hidden;
  border: 1px solid #7a8a99;
  font: 12px 'Liberation Sans', Arial, sans-serif;
}
table {
  width: 100%;
  border-spacing: 0;
  table-layout: fixed;
}
th,
td {
  border-bottom: 1px solid #e6e6e6;
  text-align: left;
}
th {
  height: 41px;
  padding: 2px 5px 0;
  background-color: #f7b733;
  color: #fff;
  font-size: 16px;
}
.center {
  text-align: center;
}
td {
  height: 40px;
  padding-left: 1px;
  border-right: 1px solid #e6e6e6;
  color: #666;
}
.status {
  display: block;
  width: 90px;
  margin-left: 9px;
  color: #fff;
  font-weight: bold;
  line-height: 23px;
  text-align: center;
}
.pending { background: linear-gradient(#ffe000, #cac531); }
.approved { background-color: #56ab2f; }
.reject { background: linear-gradient(#ed213a, #93291e); }
.scrollbar {
  flex: none;
  width: 5px;
  padding-top: 41px;
}
.thumb {
  height: 221px;
  background-color: #cdcdcd;
}

/* taskbar */
.taskbar {
  display: flex;
  height: 40px;
  background-color: #d0dae3;
  color: #111;
}
.start {
  width: 48px;
}
.start svg {
  display: block;
  width: 16px;
  height: 16px;
  margin: auto;
}
.search-box {
  display: flex;
  align-items: center;
  gap: 11px;
  width: 288px;
  padding: 0 6px 0 12px;
  border: 1px solid #bcc4cb;
  background-color: #fff;
}
.search-box label svg {
  display: block;
  width: 16px;
  height: 16px;
}
.search-box input {
  flex: 1;
  min-width: 0;
  font-size: 14px;
}
.search-box input::placeholder {
  color: #333;
}
.bird {
  align-self: flex-end;
  width: 66px;
  height: 36px;
}
.task-view {
  width: 48px;
}
.task-view svg {
  width: 18px;
  height: 16px;
}
.apps {
  display: flex;
  gap: 1px;
  padding-left: 3px;
}
.app {
  width: 48px;
  padding-top: 2px;
  border-bottom: 2px solid transparent;
}
.app svg {
  width: 24px;
  height: 24px;
}
.open {
  border-image: linear-gradient(90deg, transparent 8%, #0078d7 8%, #0078d7 92%, transparent 92%) 2;
}
.edge-app {
  border-color: #3fe03f;
  background: linear-gradient(90deg, transparent 10%, #9bd29b 10%, #9bd29b 50%, #bac4cf 50%, #bac4cf 92%, transparent 92%);
}
.alert {
  border-color: #ff7300;
  background-color: #f6ae7c;
}
.active {
  border-image: linear-gradient(#0078d7, #0078d7) 2;
  background-color: #ecf0f3;
}
.tray {
  display: flex;
  align-items: center;
  gap: 6px;
  margin-left: auto;
  padding-right: 22px;
  font-size: 11px;
}
.tray svg {
  width: 18px;
  height: 18px;
}
.tray .keyboard {
  width: 24px;
  height: 14px;
}
.tray span {
  padding-left: 4px;
}
.tray time {
  padding: 0 12px 0 8px;
  line-height: 18px;
  text-align: center;
}
.actions {
  position: relative;
}
.actions .badge {
  position: absolute;
  right: -8px;
  bottom: -5px;
  width: 16px;
  padding: 0;
  border: 1px solid #555;
  border-radius: 50%;
  background-color: #d0dae3;
  font-size: 10px;
  line-height: 14px;
}
```
